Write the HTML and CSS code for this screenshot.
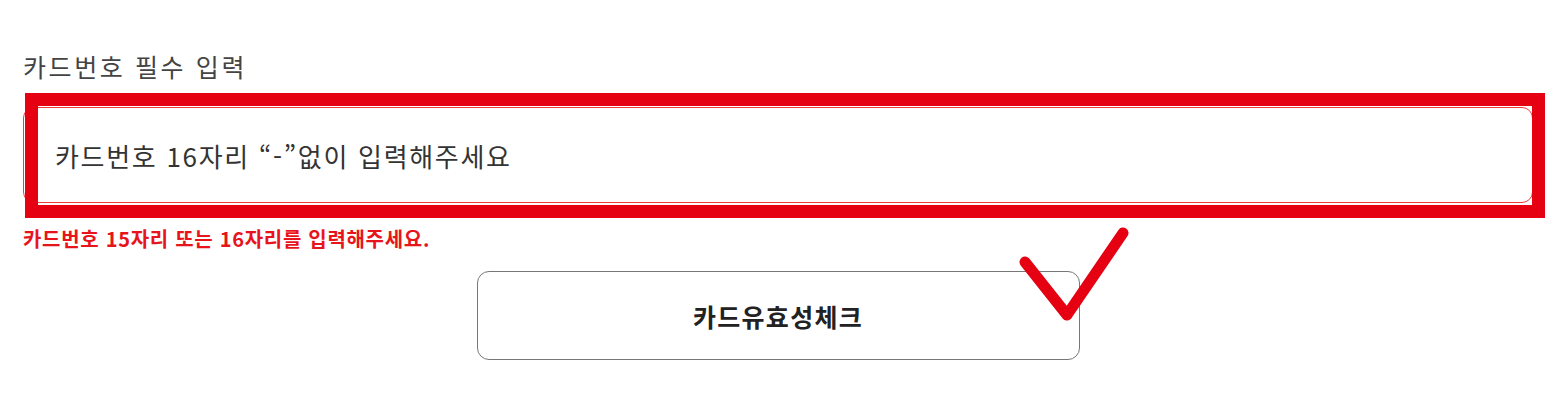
FILE: index.html
```html
<!DOCTYPE html>
<html lang="ko">
<head>
<meta charset="utf-8">
<link rel="stylesheet" href="styles.css">
</head>
<body>
<div class="page">
  <div class="field">
    <div class="label">카드번호 필수 입력</div>
    <div class="input">카드번호 16자리 “-”없이 입력해주세요</div>
    <div class="error">카드번호 15자리 또는 16자리를 입력해주세요.</div>
    <button class="check-btn" type="button">카드유효성체크</button>
  </div>
  <div class="mark-box"></div>
  <svg class="mark-check" width="130" height="110" viewBox="0 0 130 110">
    <polyline points="15,42 57,95 113,13" fill="none" stroke="#e50012" stroke-width="11" stroke-linecap="round" stroke-linejoin="round"/>
  </svg>
</div>
</body>
</html>
```

FILE: styles.css
```css
html, body {
  margin: 0;
  padding: 0;
  background: #ffffff;
}
.page {
  position: relative;
  width: 1563px;
  height: 401px;
  overflow: hidden;
  font-family: "Noto Sans CJK KR", "Noto Sans", sans-serif;
}
.field {
  display: flex;
  flex-direction: column;
  padding: 49px 30px 0 23px;
}
.label {
  font-size: 25px;
  line-height: 34px;
  letter-spacing: 2.6px;
  color: #444444;
  height: 34px;
}
.input {
  margin-top: 24px;
  box-sizing: border-box;
  height: 96px;
  border: 1.5px solid #ef3b3b;
  border-radius: 11px;
  padding-left: 31px;
  display: flex;
  align-items: center;
  font-size: 26px;
  letter-spacing: 1.7px;
  color: #333333;
}
.error {
  margin-top: 24px;
  font-size: 20px;
  line-height: 24px;
  letter-spacing: 0.7px;
  font-weight: 700;
  color: #e8141c;
}
.check-btn {
  margin: 20px auto 0;
  width: 603px;
  height: 89px;
  box-sizing: border-box;
  background: #ffffff;
  border: 1.5px solid #777777;
  border-radius: 12px;
  font-family: "Noto Sans CJK KR", "Noto Sans", sans-serif;
  font-size: 25px;
  font-weight: 700;
  letter-spacing: 1.3px;
  color: #222222;
  padding: 0;
}
.mark-box {
  position: absolute;
  left: 25px;
  top: 93px;
  width: 1520px;
  height: 125px;
  box-sizing: border-box;
  border: 13px solid #e50012;
}
.mark-check {
  position: absolute;
  left: 1010px;
  top: 220px;
}
```
